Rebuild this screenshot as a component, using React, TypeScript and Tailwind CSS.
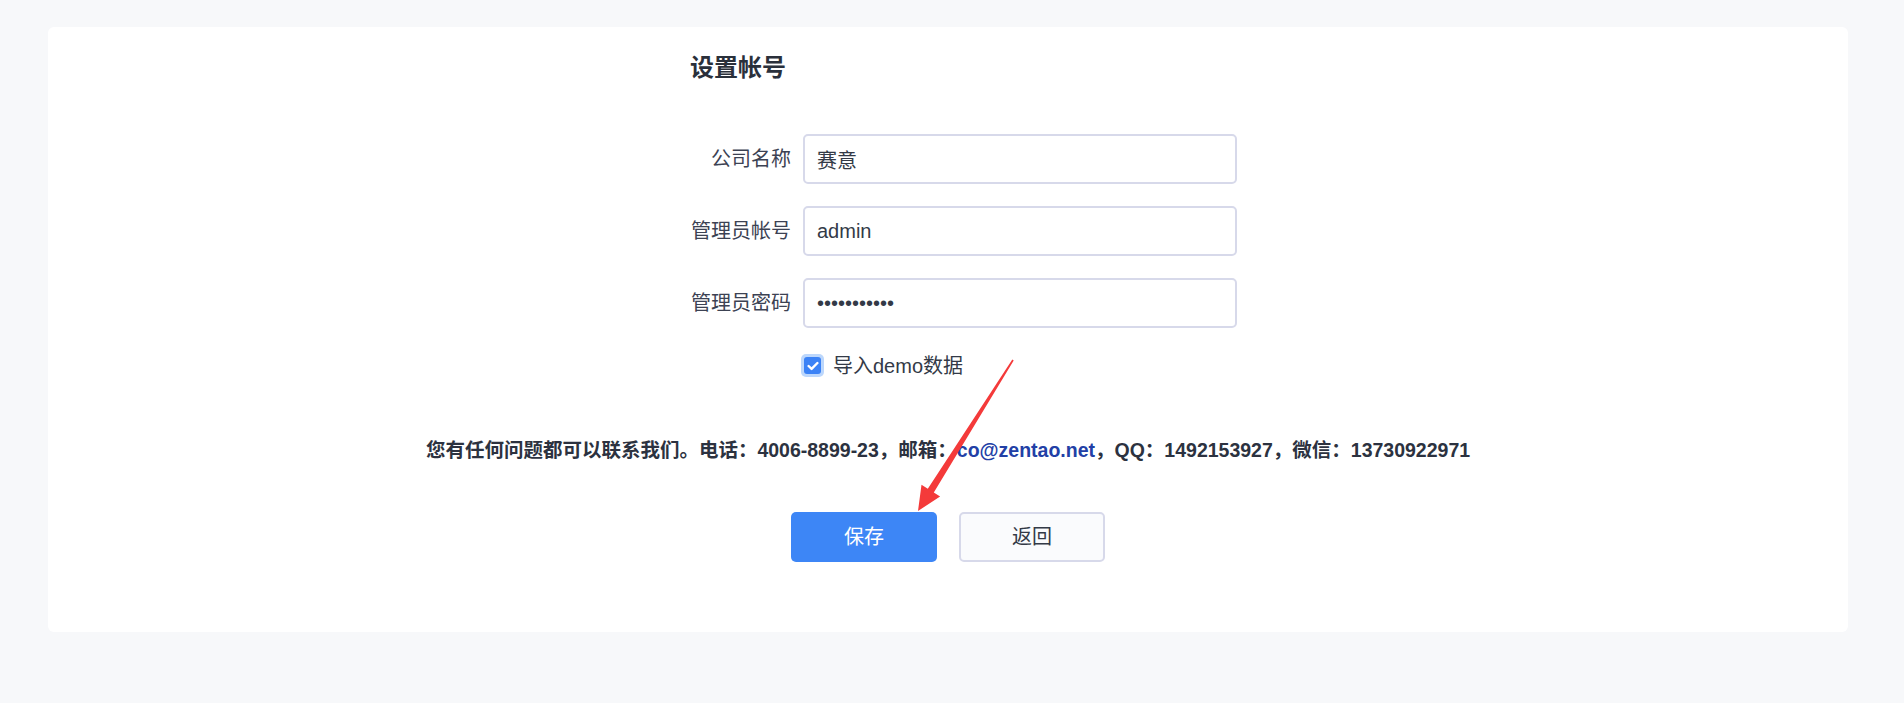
import { useState } from "react";

const FONT = { fontFamily: '"Liberation Sans", "Noto Sans CJK SC", sans-serif' };

function Field({ label, value, type = "text" }: { label: string; value: string; type?: string }) {
  return (
    <div className="flex items-center gap-[12px]">
      <label className="w-[101px] text-right text-[20px] leading-[30px] text-[#3c4253] whitespace-nowrap">{label}</label>
      <input
        type={type}
        defaultValue={value}
        className="w-[434px] h-[50px] px-[12px] rounded-[5px] border-2 border-[#d7d9ea] bg-white text-[20px] text-[#333a47] outline-none"
        style={FONT}
      />
    </div>
  );
}

export default function App() {
  const [demo, setDemo] = useState(true);

  return (
    <div className="min-h-[703px] bg-[#f7f8fa] pt-[27px] pl-[48px]" style={FONT}>
      <div className="relative w-[1800px] h-[605px] rounded-[6px] bg-white pt-[29px] flex flex-col">
        {/* Form */}
        <div className="ml-[642px] flex flex-col">
          <h2 className="text-[24px] leading-[24px] font-bold text-[#2a303b]">设置帐号</h2>

          <div className="mt-[54px] flex flex-col gap-[22px]">
            <Field label="公司名称" value="赛意" />
            <Field label="管理员帐号" value="admin" />
            <Field label="管理员密码" value="12345678901" type="password" />
          </div>

          <label className="mt-[26px] ml-[111px] flex items-center gap-[9px] h-[23px] cursor-pointer" onClick={() => setDemo(!demo)}>
            <span className="w-[23px] h-[23px] rounded-[5px] bg-[#bcd7fc] p-[3px] flex">
              <span className={`flex-1 rounded-[3px] flex items-center justify-center ${demo ? "bg-[#3b82f6]" : "bg-white"}`}>
                {demo && (
                  <svg width="12" height="10" viewBox="0 0 12 10">
                    <path d="M1.6 5 L4.6 7.9 L10.4 2" fill="none" stroke="white" strokeWidth="2.4" strokeLinecap="round" strokeLinejoin="round" />
                  </svg>
                )}
              </span>
            </span>
            <span className="text-[20px] leading-[30px] text-[#333a47]">导入demo数据</span>
          </label>
        </div>

        {/* Contact */}
        <p className="mt-[58px] text-center text-[19.5px] leading-[30px] font-bold text-[#2c3240]">
          您有任何问题都可以联系我们。电话：4006-8899-23，邮箱：<a className="text-[#2240a6]">co@zentao.net</a>，QQ：1492153927，微信：13730922971
        </p>

        {/* Buttons */}
        <div className="mt-[47px] flex justify-center gap-[22px]">
          <button className="w-[146px] h-[50px] rounded-[5px] bg-[#3d86f6] text-[20px] text-white">保存</button>
          <button className="w-[146px] h-[50px] rounded-[5px] border-2 border-[#d7d9ea] bg-[#fafbfd] text-[20px] text-[#333a47]">返回</button>
        </div>

        {/* Annotation arrow */}
        <svg className="absolute left-0 top-0 pointer-events-none" width="1800" height="605" viewBox="48 27 1800 605">
          <polygon
            points="1012.3,359.5 1013.7,360.5 933.8,492.4 940.1,496.4 918,511 921.5,484.8 927.8,488.8"
            fill="#f43a3a"
          />
        </svg>
      </div>
    </div>
  );
}
